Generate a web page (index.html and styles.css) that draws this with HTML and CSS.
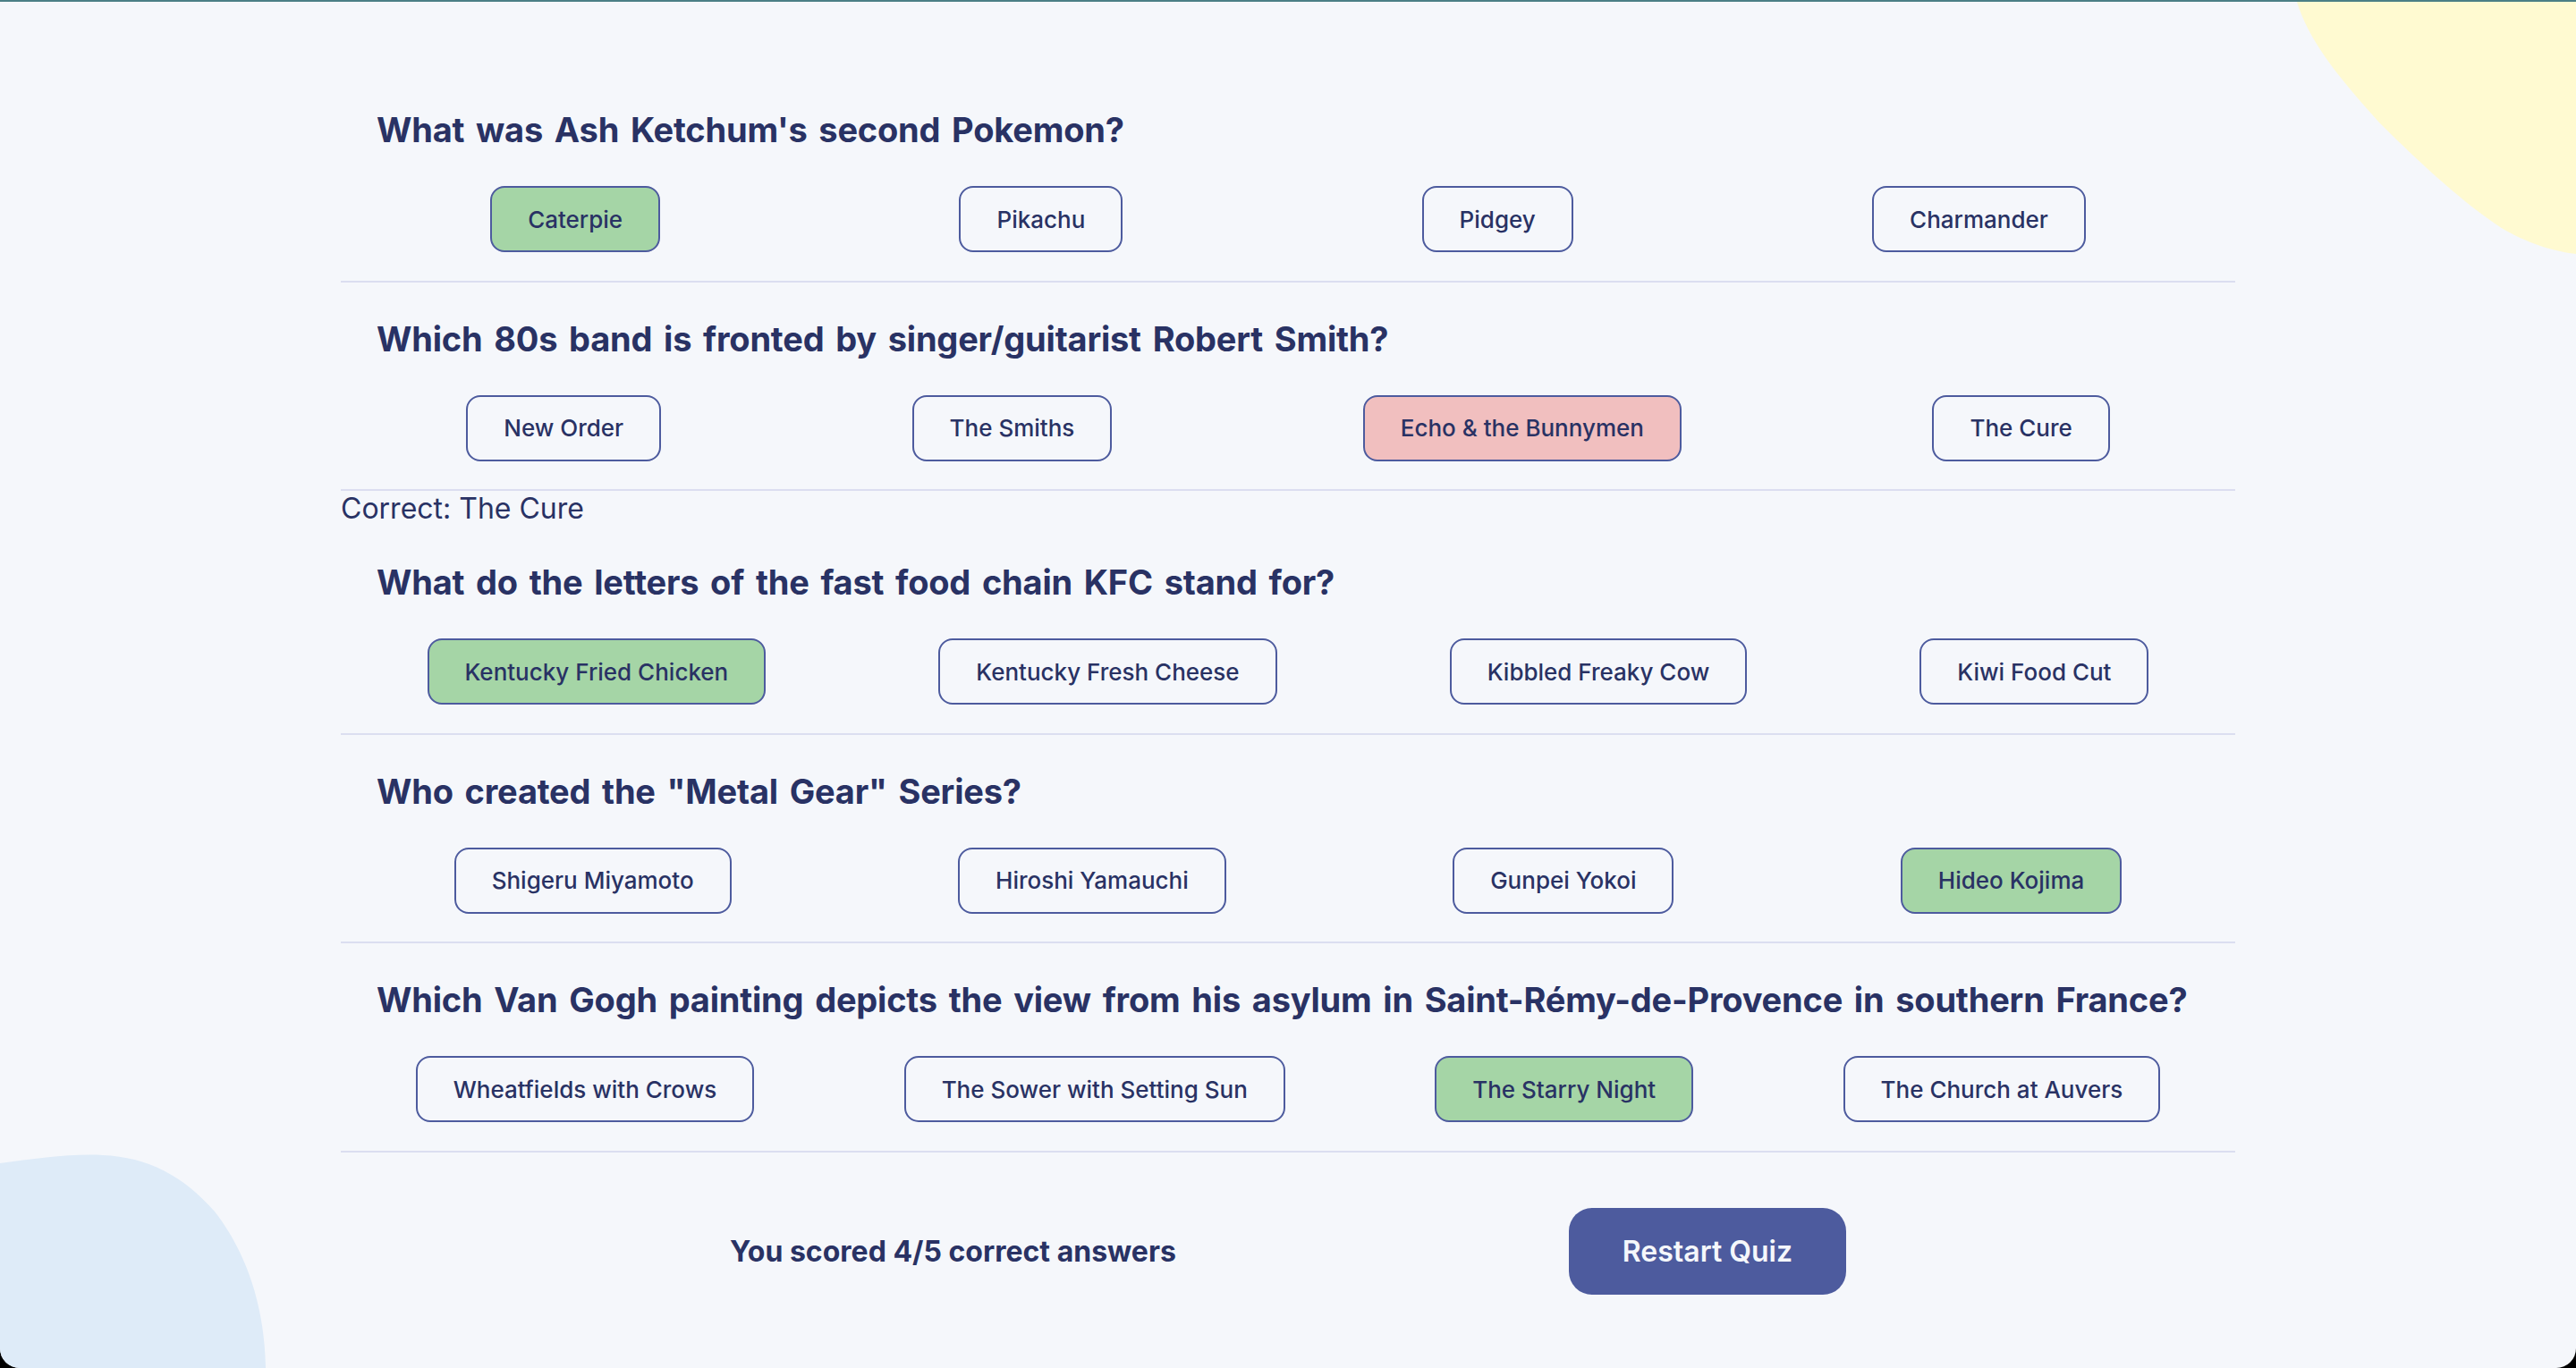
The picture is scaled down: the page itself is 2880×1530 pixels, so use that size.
FILE: index.html
```html
<!DOCTYPE html>
<html lang="en">
<head>
<meta charset="utf-8">
<title>Quizzical</title>
<link rel="stylesheet" href="styles.css">
</head>
<body>
  <svg class="blob blob-yellow" width="320" height="290" viewBox="0 0 320 290" aria-hidden="true">
    <path d="M8 0 C 20 40, 50 80, 100 135 C 150 185, 200 230, 240 255 C 270 272, 300 280, 320 282 L 320 0 Z" fill="#FFFAD1"/>
  </svg>
  <svg class="blob blob-blue" width="300" height="240" viewBox="0 0 300 240" aria-hidden="true">
    <path d="M0 11 C 40 6, 80 0, 115 2 C 165 4, 205 25, 240 65 C 275 110, 296 170, 297 240 L 0 240 Z" fill="#DEEBF8"/>
  </svg>

  <main class="quiz">
    <section class="question">
      <h2 class="question-title">What was Ash Ketchum's second Pokemon?</h2>
      <div class="answers">
        <button class="answer answer-correct">Caterpie</button>
        <button class="answer">Pikachu</button>
        <button class="answer">Pidgey</button>
        <button class="answer">Charmander</button>
      </div>
    </section>

    <section class="question">
      <h2 class="question-title">Which 80s band is fronted by singer/guitarist Robert Smith?</h2>
      <div class="answers">
        <button class="answer">New Order</button>
        <button class="answer">The Smiths</button>
        <button class="answer answer-wrong">Echo &amp; the Bunnymen</button>
        <button class="answer">The Cure</button>
      </div>
    </section>
    <p class="correct-note">Correct: The Cure</p>

    <section class="question">
      <h2 class="question-title">What do the letters of the fast food chain KFC stand for?</h2>
      <div class="answers">
        <button class="answer answer-correct">Kentucky Fried Chicken</button>
        <button class="answer">Kentucky Fresh Cheese</button>
        <button class="answer">Kibbled Freaky Cow</button>
        <button class="answer">Kiwi Food Cut</button>
      </div>
    </section>

    <section class="question">
      <h2 class="question-title">Who created the "Metal Gear" Series?</h2>
      <div class="answers">
        <button class="answer">Shigeru Miyamoto</button>
        <button class="answer">Hiroshi Yamauchi</button>
        <button class="answer">Gunpei Yokoi</button>
        <button class="answer answer-correct">Hideo Kojima</button>
      </div>
    </section>

    <section class="question">
      <h2 class="question-title">Which Van Gogh painting depicts the view from his asylum in Saint-Rémy-de-Provence in southern France?</h2>
      <div class="answers">
        <button class="answer">Wheatfields with Crows</button>
        <button class="answer">The Sower with Setting Sun</button>
        <button class="answer answer-correct">The Starry Night</button>
        <button class="answer">The Church at Auvers</button>
      </div>
    </section>

    <footer class="results">
      <p class="score">You scored 4/5 correct answers</p>
      <button class="restart">Restart Quiz</button>
    </footer>
  </main>
</body>
</html>
```

FILE: styles.css
```css
* { box-sizing: border-box; }

html {
  margin: 0;
  background: #000;
}

body {
  margin: 0;
  min-height: 100vh;
  position: relative;
  overflow: hidden;
  background: #F5F7FB;
  border-top: 2px solid #4B7F86;
  border-radius: 0 0 22px 22px;
  color: #293264;
  font-family: Inter, "Noto Sans", sans-serif;
  padding-top: 80px;
}

.blob {
  position: absolute;
  display: block;
}

.blob-yellow {
  top: 0;
  right: 0;
}

.blob-blue {
  left: 0;
  bottom: 0;
}

.quiz {
  position: relative;
  width: 2118px;
  margin: 0 auto;
}

.question {
  padding: 40px 0 31.5px;
  border-bottom: 2px solid #DBDEF0;
}

.question-title {
  margin: 0 0 40px 40px;
  font-size: 38px;
  line-height: 46px;
  font-weight: 700;
  letter-spacing: -0.2px;
  word-spacing: 4px;
}

.answers {
  display: flex;
  justify-content: space-around;
  align-items: center;
}

.answer {
  font-family: Inter, "Noto Sans", sans-serif;
  font-size: 26px;
  font-weight: 500;
  line-height: 33px;
  color: #293264;
  background: transparent;
  border: 2px solid #4D5B9E;
  border-radius: 16px;
  padding: 18.5px 40px;
}

.answer-correct {
  background: #A5D5A6;
}

.answer-wrong {
  background: #F1BFBF;
}

.correct-note {
  margin: 0;
  font-size: 32px;
  line-height: 39px;
  font-weight: 400;
}

.results {
  display: flex;
  justify-content: center;
  align-items: center;
  gap: 439px;
  padding-top: 62px;
}

.score {
  margin: 0;
  font-size: 32px;
  font-weight: 700;
}

.restart {
  font-family: Inter, "Noto Sans", sans-serif;
  font-size: 32px;
  font-weight: 600;
  line-height: 39px;
  color: #F5F7FB;
  background: #4D5B9E;
  border: none;
  border-radius: 26px;
  padding: 29px 60px;
}
```
